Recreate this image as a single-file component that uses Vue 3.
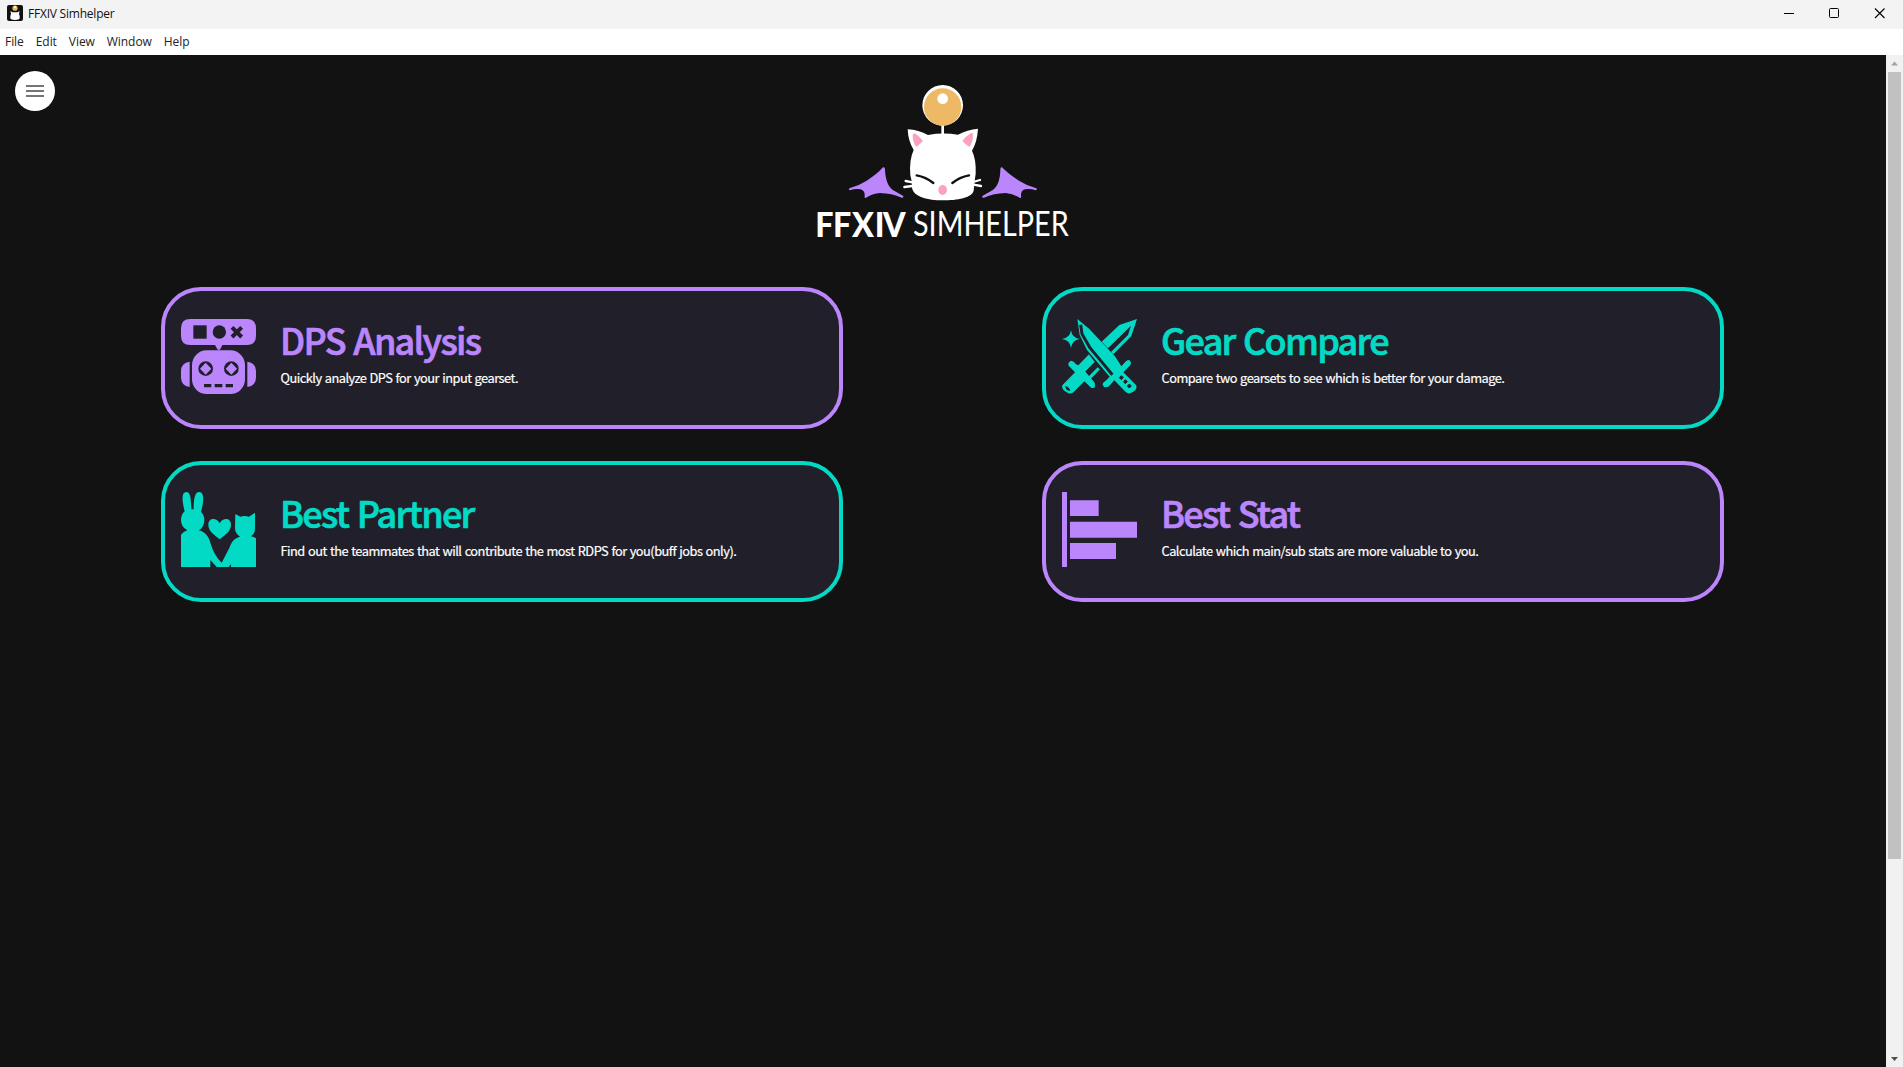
<script setup>
const menus = ['File', 'Edit', 'View', 'Window', 'Help']
const cards = [
  { id: 'dps', tone: 'purple', title: 'DPS Analysis', text: 'Quickly analyze DPS for your input gearset.' },
  { id: 'gear', tone: 'teal', title: 'Gear Compare', text: 'Compare two gearsets to see which is better for your damage.' },
  { id: 'partner', tone: 'teal', title: 'Best Partner', text: 'Find out the teammates that will contribute the most RDPS for you(buff jobs only).' },
  { id: 'stat', tone: 'purple', title: 'Best Stat', text: 'Calculate which main/sub stats are more valuable to you.' },
]
</script>

<template>
  <div class="window">
    <header class="titlebar">
      <svg class="app-icon" viewBox="0 0 16 16">
        <rect width="16" height="16" rx="2" fill="#111" />
        <circle cx="8" cy="3.2" r="2.6" fill="#edb968" />
        <circle cx="8" cy="2" r="1" fill="#fff" />
        <path d="M3.5 6 L5.5 7.3 H10.5 L12.5 6 L12 9 Q13.5 13 12 14.3 Q8 15.6 4 14.3 Q2.5 13 4 9Z" fill="#fff" />
      </svg>
      <span class="app-name">FFXIV Simhelper</span>
      <svg class="controls" viewBox="0 0 115 29" fill="none" stroke="#000">
        <path d="M1 13.5H11" />
        <rect x="46.5" y="8.5" width="9" height="9" rx="1" />
        <path d="M92 8.5L101.5 18M101.5 8.5L92 18" stroke-width="1.1" />
      </svg>
    </header>
    <nav class="menubar">
      <span v-for="m in menus" :key="m" class="menu">{{ m }}</span>
    </nav>
    <div class="body">
      <main class="content">
        <button class="drawer">
          <svg viewBox="0 0 40 40"><path d="M11 15H29M11 20H29M11 25H29" stroke="#757575" stroke-width="2" /></svg>
        </button>
        <svg class="logo" viewBox="0 0 870 540">
          <path d="M428 160V195" stroke="#fff" stroke-width="8" />
          <circle cx="428" cy="106" r="61" fill="#fff" />
          <circle cx="428" cy="111" r="56" fill="#edb965" />
          <circle cx="428" cy="86" r="16" fill="#fff" />
          <path d="M323 178Q356 180 384 195Q428 187 474 194Q502 179 534 176Q532 214 516 242Q529 268 527 312Q523 335 521 362C516 383 472 391 428 391C384 391 341 381 336 354Q337 334 331 316Q327 270 341 240Q324 212 323 178Z" fill="#fff" />
          <path d="M338 196Q338 188 347 191Q360 200 369 213L350 231Q338 219 338 196ZM519 195Q520 186 510 191Q496 199 487 213Q496 223 508 231Q518 219 519 195Z" fill="#fba2c0" />
          <path d="M350 316Q378 321 400 339M507 316Q479 321 457 339" fill="none" stroke="#111" stroke-width="7" stroke-linecap="round" />
          <ellipse cx="428" cy="360" rx="13" ry="15" fill="#fba2c0" />
          <path d="M317 333L338 337M313 351L337 348M540 330L519 336M543 348L520 344" stroke="#fff" stroke-width="7" stroke-linecap="round" />
          <path d="M249 292Q255 290 255 299Q257 350 285 364L310 378Q312 384 305 383Q276 370 240 369Q217 371 197 384Q192 384 194 377Q195 362 182 358Q166 355 150 361Q144 359 148 355Q178 346 200 332Q232 312 249 292Z" fill="#bb86fc" />
          <path d="M606 292Q601 290 601 299Q600 350 572 364L547 378Q545 384 552 383Q581 370 617 369Q640 371 660 384Q665 384 663 377Q662 362 675 358Q691 355 707 361Q713 359 709 355Q679 346 657 332Q625 312 606 292Z" fill="#bb86fc" />
          <text x="49.5 106.5 168 241 268" y="500" class="brand-bold" transform="scale(.93 1)">FFXIV</text>
          <text x="339" y="499" class="brand-thin" textLength="467" lengthAdjust="spacingAndGlyphs">SIMHELPER</text>
        </svg>
        <section class="grid">
          <article v-for="c in cards" :key="c.id" :class="['card', c.tone]">
            <svg v-if="c.id === 'dps'" class="icon" viewBox="0 0 225 225">
              <path d="M28 0H197Q225 0 225 28V50Q225 78 197 78H124L117 92H110L102 78H28Q0 78 0 50V28Q0 0 28 0Z" />
              <rect x="33" y="94" width="159" height="131" rx="44" />
              <path d="M26 128V204Q0 201 0 175V156Q0 132 26 128ZM199 128V204Q225 201 225 175V156Q225 132 199 128Z" />
              <g class="hole">
                <rect x="37" y="19" width="40" height="40" />
                <circle cx="115" cy="39" r="20" />
                <circle cx="74" cy="149" r="22" />
                <circle cx="151" cy="149" r="22" />
                <path d="M69 195H91V205H69ZM101 195H124V205H101ZM134 195H156V205H134Z" />
              </g>
              <path d="M153 25L182 54M182 25L153 54" class="cut" stroke-width="12" />
              <path d="M74 131L91 149L74 167L57 149ZM151 131L168 149L151 167L134 149Z" />
            </svg>
            <svg v-else-if="c.id === 'gear'" class="icon" viewBox="0 0 225 225">
              <path d="M27 34Q30 56 53 60Q30 64 27 86Q24 64 0 60Q24 56 27 34Z" />
              <path d="M225 0L208 51L154 106L147 99L198 48L207 20L138 88L119 68L172 18Z" />
              <path d="M81 106L98 129L69 158L99 205Q89 210 83 202L67 187L35 219Q24 228 13 219Q-3 209 1 199L39 160L20 140Q16 130 27 125Q36 126 42 136L49 139ZM107 145L114 151L86 180L79 173Z" />
              <path d="M69 157L97 190Q104 205 91 207Q84 206 81 198L55 175Z" />
              <path d="M46 0L82 30L160 113L178 142L192 127Q204 117 207 132Q207 140 199 144L184 160L222 198Q228 210 211 220Q198 228 189 217L157 184L141 202Q126 210 122 197Q122 191 133 184L143 173L75 93L53 48Z" />
              <path d="M56 17L60 45L83 85L121 131L151 167" class="cut" stroke-width="9" />
              <path d="M11 203Q20 203 23 214Q12 214 11 203ZM178 170l6 6-6 6-6-6ZM190 182l6 6-6 6-6-6ZM202 195l6 6-6 6-6-6Z" class="hole" stroke="#211f29" stroke-width="3" />
            </svg>
            <svg v-else-if="c.id === 'partner'" class="icon" viewBox="0 0 225 225">
              <path d="M16 0C28 0 30 18 31 52H38C38 18 42 0 55 0C70 0 69 28 60 59Q70 69 70 84Q70 106 53 115C75 120 84 136 89 155Q98 188 122 212L145 168C152 149 158 140 177 134Q162 124 162 108L163 66L178 74Q190 70 204 74L222 62V107Q223 124 210 133Q218 135 225 139V225H150V216L143 225H107L88 204V225H0V128Q7 119 19 115Q0 105 0 84Q0 68 11 58Q-4 0 16 0Z" />
              <path d="M116 142C101 128 82 119 82 98C82 78 106 75 116 94C127 75 150 78 150 98C150 119 131 128 116 142Z" />
            </svg>
            <svg v-else class="icon" viewBox="0 0 225 225">
              <path d="M0 0H15V225H0ZM24 25H110V72H24ZM24 89H225V137H24ZM24 153H162V201H24Z" />
            </svg>
            <div class="copy">
              <h2>{{ c.title }}</h2>
              <p>{{ c.text }}</p>
            </div>
          </article>
        </section>
      </main>
      <aside class="scrollbar">
        <svg viewBox="0 0 17 17"><path d="M8.5 6.5L12 10.5H5Z" fill="#a3a3a3" /></svg>
        <div class="thumb"></div>
        <svg class="down" viewBox="0 0 17 17"><path d="M8.5 11L12 7H5Z" fill="#505050" /></svg>
      </aside>
    </div>
  </div>
</template>

<style>
body { margin: 0; background: #121212; overflow: hidden; }
</style>
<style scoped>
.window { height: 1067px; display: flex; flex-direction: column; font-family: "Noto Sans CJK KR", sans-serif; }
.titlebar { height: 29px; flex: none; display: flex; align-items: center; background: #f3f3f3; box-sizing: border-box; padding: 0 5px 0 7px; }
.app-icon { width: 16px; height: 16px; margin-top: -3px; }
.app-name { font: 12px/16px "Open Sans", sans-serif; color: #111; margin: -1px 0 0 5px; letter-spacing: -0.22px; }
.controls { width: 115px; height: 29px; margin-left: auto; }
.menubar { height: 26px; flex: none; background: #fff; display: flex; align-items: center; padding-left: 5px; box-sizing: border-box; }
.menu { font: 12px/16px "Open Sans", sans-serif; color: #222; margin-right: 12px; letter-spacing: -0.06px; }
.body { flex: 1; min-height: 0; display: flex; }
.content { flex: 1; background: #121212; display: flex; flex-direction: column; align-items: center; }
.drawer { align-self: flex-start; width: 40px; height: 40px; border: 0; padding: 0; border-radius: 50%; background: #fff; margin: 16px 0 -41px 15px; }
.drawer svg { display: block; }
.logo { width: 290px; height: 180px; flex: none; margin-left: 4px; overflow: visible; }
.brand-bold { font: 900 104px Lato, sans-serif; fill: #fff; }
.brand-thin { font: 400 103px Lato, sans-serif; fill: #fff; }
.grid { margin: 37px 1px 0 0; display: grid; grid-template-columns: 682px 682px; column-gap: 199px; row-gap: 32px; }
.card { height: 142px; box-sizing: border-box; border: 4px solid; border-radius: 40px; background: #211f29; display: flex; padding: 28px 16px 0; }
.card:nth-child(n+3) { height: 141px; padding-top: 27px; }
.purple { border-color: #bb86fc; color: #bb86fc; }
.teal { border-color: #03dac5; color: #03dac5; }
.icon { width: 75px; height: 75px; fill: currentColor; flex: none; }
.hole { fill: #211f29; }
.cut { fill: none; stroke: #211f29; }
.copy { margin-left: 24px; }
h2 { margin: -7px 0 0; font-size: 36px; line-height: 54px; font-weight: 500; letter-spacing: -1.72px; word-spacing: 2px; -webkit-text-stroke: 0.7px currentColor; white-space: nowrap; }
p { margin: 2px 0 0 0.5px; font-size: 12.8px; line-height: 19px; letter-spacing: -0.51px; word-spacing: 0.8px; color: #fff; -webkit-text-stroke: 0.2px currentColor; white-space: nowrap; }
.scrollbar { width: 17px; background: #f1f1f1; display: flex; flex-direction: column; }
.scrollbar svg { width: 17px; height: 17px; flex: none; }
.thumb { height: 787px; width: 13px; background: #c1c1c1; margin-left: 2px; }
.scrollbar .down { margin-top: auto; }
</style>
